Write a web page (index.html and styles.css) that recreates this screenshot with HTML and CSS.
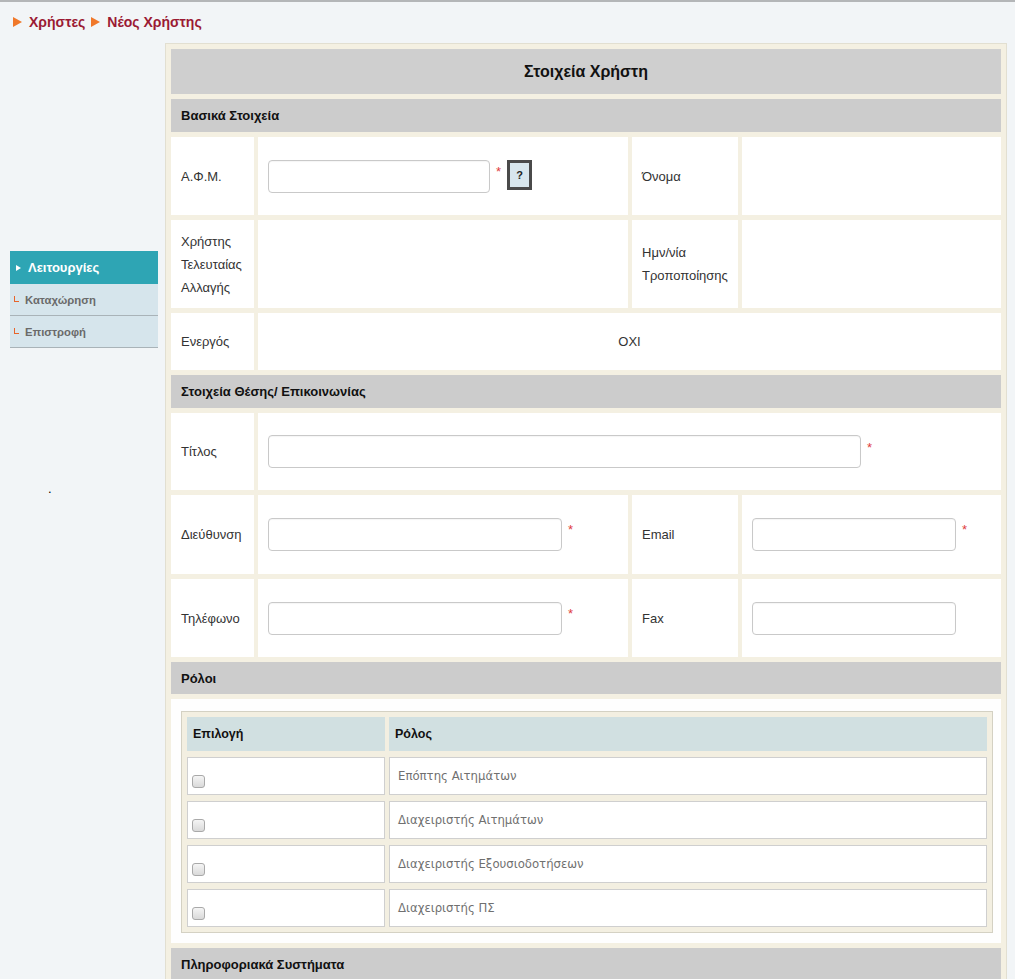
FILE: index.html
```html
<!DOCTYPE html>
<html lang="el">
<head>
<meta charset="utf-8">
<title>Νέος Χρήστης</title>
<link rel="stylesheet" href="styles.css">
</head>
<body>
<div class="topline"></div>
<nav class="crumbs">
  <span class="tri"></span><a class="crumb">Χρήστες</a>
  <span class="tri"></span><a class="crumb">Νέος Χρήστης</a>
</nav>
<div class="layout">
  <aside class="side">
    <div class="menu">
      <div class="menu-head"><span class="wtri"></span>Λειτουργίες</div>
      <div class="menu-item"><span class="elbow"></span>Καταχώρηση</div>
      <div class="menu-item"><span class="elbow"></span>Επιστροφή</div>
    </div>
    <div class="dot">.</div>
  </aside>
  <main class="panel">
    <div class="form-grid">
      <div class="title span4">Στοιχεία Χρήστη</div>
      <div class="sect span4">Βασικά Στοιχεία</div>

      <div class="cell lbl">Α.Φ.Μ.</div>
      <div class="cell val"><input class="inp w-afm" type="text"><span class="req">*</span><button class="help" type="button">?</button></div>
      <div class="cell lbl">Όνομα</div>
      <div class="cell val"></div>

      <div class="cell lbl">Χρήστης Τελευταίας Αλλαγής</div>
      <div class="cell val"></div>
      <div class="cell lbl">Ημν/νία Τροποποίησης</div>
      <div class="cell val"></div>

      <div class="cell lbl">Ενεργός</div>
      <div class="cell val span3 center">ΟΧΙ</div>

      <div class="sect span4">Στοιχεία Θέσης/ Επικοινωνίας</div>

      <div class="cell lbl">Τίτλος</div>
      <div class="cell val span3"><input class="inp w-title" type="text"><span class="req">*</span></div>

      <div class="cell lbl">Διεύθυνση</div>
      <div class="cell val"><input class="inp w-mid" type="text"><span class="req">*</span></div>
      <div class="cell lbl">Email</div>
      <div class="cell val"><input class="inp w-small" type="text"><span class="req">*</span></div>

      <div class="cell lbl">Τηλέφωνο</div>
      <div class="cell val"><input class="inp w-mid" type="text"><span class="req">*</span></div>
      <div class="cell lbl">Fax</div>
      <div class="cell val"><input class="inp w-small" type="text"></div>

      <div class="sect span4">Ρόλοι</div>

      <div class="roles span4">
        <div class="roles-table">
          <div class="rh">Επιλογή</div>
          <div class="rh">Ρόλος</div>
          <div class="rc chk"><input type="checkbox" class="cb"></div>
          <div class="rc">Επόπτης Αιτημάτων</div>
          <div class="rc chk"><input type="checkbox" class="cb"></div>
          <div class="rc">Διαχειριστής Αιτημάτων</div>
          <div class="rc chk"><input type="checkbox" class="cb"></div>
          <div class="rc">Διαχειριστής Εξουσιοδοτήσεων</div>
          <div class="rc chk"><input type="checkbox" class="cb"></div>
          <div class="rc">Διαχειριστής ΠΣ</div>
        </div>
      </div>

      <div class="sect span4">Πληροφοριακά Συστήματα</div>
    </div>
  </main>
</div>
</body>
</html>
```

FILE: styles.css
```css
html, body {
  margin: 0;
  padding: 0;
}
body {
  background: #f2f5f7;
  font-family: "Liberation Sans", Arial, sans-serif;
  color: #333;
  overflow: hidden;
}
.topline {
  height: 2px;
  background: #b4b6b8;
}
.crumbs {
  height: 41px;
  display: flex;
  align-items: center;
  padding-left: 13px;
  box-sizing: border-box;
  padding-bottom: 2px;
}
.tri {
  width: 0;
  height: 0;
  border-top: 5px solid transparent;
  border-bottom: 5px solid transparent;
  border-left: 9px solid #f0782a;
  margin-right: 7px;
}
.crumb {
  font-weight: bold;
  font-size: 14px;
  color: #9b1a33;
  margin-right: 6px;
}
.layout {
  display: flex;
  padding-left: 10px;
  gap: 7px;
  align-items: flex-start;
}
.side {
  width: 148px;
  flex: none;
  padding-top: 208px;
}
.menu-head {
  height: 33px;
  background: #2ea5b4;
  color: #fff;
  font-weight: bold;
  font-size: 13px;
  display: flex;
  align-items: center;
  padding-left: 6px;
}
.wtri {
  width: 0;
  height: 0;
  border-top: 3px solid transparent;
  border-bottom: 3px solid transparent;
  border-left: 5px solid #fff;
  margin-right: 7px;
}
.menu-item {
  height: 31px;
  background: #d6e5ec;
  border-bottom: 1px solid #a9b3b8;
  color: #6a6a6a;
  font-weight: bold;
  font-size: 11.3px;
  display: flex;
  align-items: center;
  padding-left: 4px;
}
.elbow {
  width: 4px;
  height: 5px;
  border-left: 1px solid #e8642a;
  border-bottom: 1px solid #e8642a;
  margin-right: 6px;
  margin-top: -2px;
}
.dot {
  padding-left: 38px;
  padding-top: 133px;
  font-size: 13px;
  color: #000;
}
.panel {
  width: 842px;
  box-sizing: border-box;
  border: 1px solid #e2dfd1;
  background: #f4f0e2;
  padding: 5px;
  height: 940px;
}
.form-grid {
  display: grid;
  grid-template-columns: 83px 370px 106px 259px;
  grid-template-rows: 45px 33px 78px 88px 57px 33px 77px 79px 78px 32px 244px 33px;
  column-gap: 4px;
  row-gap: 5px;
}
.span4 { grid-column: span 4; }
.span3 { grid-column: span 3; }
.title {
  background: #cfcfcf;
  font-weight: bold;
  font-size: 16px;
  color: #111;
  display: flex;
  align-items: center;
  justify-content: center;
}
.sect {
  background: #cccccc;
  font-weight: bold;
  font-size: 13px;
  color: #111;
  display: flex;
  align-items: center;
  padding-left: 10px;
}
.cell {
  background: #fff;
  display: flex;
  align-items: center;
  font-size: 13px;
  line-height: 23px;
  color: #333;
}
.lbl {
  padding-left: 10px;
  padding-right: 6px;
}
.val {
  padding-left: 10px;
}
.center {
  justify-content: center;
  padding-left: 0;
}
.inp {
  height: 33px;
  box-sizing: border-box;
  border: 1px solid #c9c9c9;
  border-radius: 4px;
  background: #fff;
  box-shadow: inset 0 1px 1px rgba(0,0,0,0.04);
  margin: 0;
  padding: 0 6px;
  font: inherit;
  align-self: center;
}
.w-afm { width: 222px; }
.w-title { width: 593px; }
.w-mid { width: 294px; }
.w-small { width: 204px; }
.req {
  align-self: flex-start;
  margin-top: 29px;
  margin-left: 6px;
  color: #e03c3c;
  font-size: 13px;
  line-height: 12px;
}
.help {
  align-self: flex-start;
  margin-top: 23px;
  margin-left: 6px;
  width: 25px;
  height: 30px;
  box-sizing: border-box;
  border: 3px solid #4a4a4a;
  background: #d8e6ed;
  color: #222;
  font-weight: bold;
  font-size: 11px;
  font-family: "Liberation Sans", Arial, sans-serif;
  padding: 0;
}
.roles {
  background: #fefefe;
  padding: 12px 8px 10px 10px;
}
.roles-table {
  border: 1px solid #d4d1c3;
  background: #f3efe1;
  padding: 5px;
  display: grid;
  grid-template-columns: 198px 598px;
  grid-template-rows: 34px 38px 38px 38px 38px;
  column-gap: 4px;
  row-gap: 6px;
}
.rh {
  background: #d1e0e1;
  font-weight: bold;
  font-size: 12.5px;
  color: #111;
  display: flex;
  align-items: center;
  padding-left: 6px;
}
.rc {
  background: #fff;
  border: 1px solid #cfcfcf;
  box-sizing: border-box;
  font-family: "DejaVu Sans", Verdana, sans-serif;
  font-size: 11.7px;
  color: #707070;
  display: flex;
  align-items: center;
  padding-left: 8px;
  padding-bottom: 1px;
}
.chk {
  align-items: flex-start;
  padding-left: 4px;
  padding-top: 17px;
}
.cb {
  appearance: none;
  -webkit-appearance: none;
  width: 13px;
  height: 13px;
  margin: 0;
  border: 1px solid #a9a9a9;
  border-radius: 3px;
  background: linear-gradient(#f5f5f5, #d9d9d9);
}
```
